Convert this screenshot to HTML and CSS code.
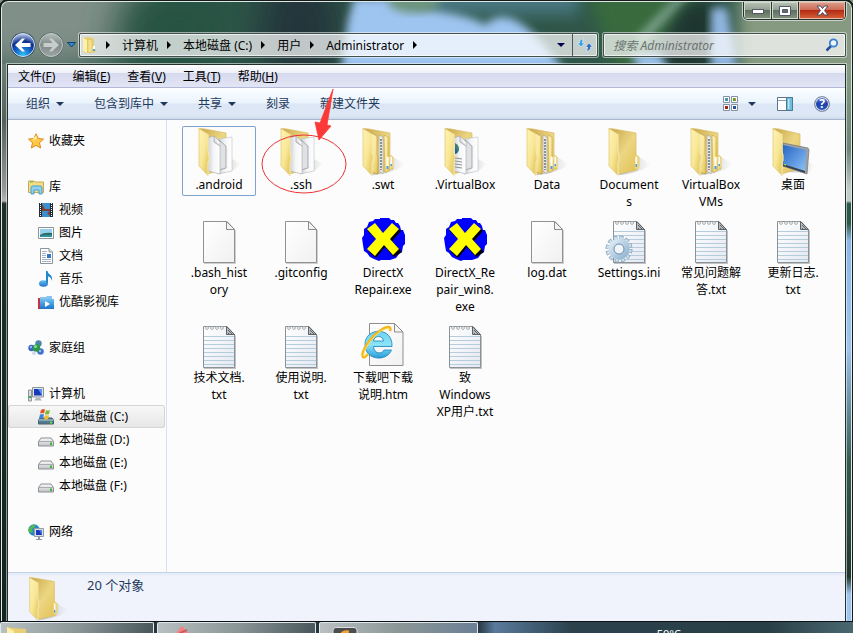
FILE: index.html
```html
<!DOCTYPE html>
<html lang="zh-CN">
<head>
<meta charset="utf-8">
<title>Administrator</title>
<link rel="stylesheet" href="styles.css">
</head>
<body>
<svg class="defs" width="0" height="0" aria-hidden="true">
  <defs>
    <linearGradient id="gPanel" x1="0" y1="0" x2="1" y2="1"><stop offset="0" stop-color="#fff3b5"/><stop offset=".5" stop-color="#f8e795"/><stop offset="1" stop-color="#dfbd4d"/></linearGradient>
    <linearGradient id="gBack" x1="0" y1="0" x2="1" y2="1"><stop offset="0" stop-color="#c7a448"/><stop offset=".5" stop-color="#ecd682"/><stop offset="1" stop-color="#e2bf50"/></linearGradient>
    <linearGradient id="gSheet" x1="0" y1="0" x2="1" y2="0"><stop offset="0" stop-color="#c9cbcf"/><stop offset=".5" stop-color="#f4f5f7"/><stop offset="1" stop-color="#fff"/></linearGradient>
    <linearGradient id="gPage" x1="0" y1="0" x2="1" y2="1"><stop offset="0" stop-color="#fff"/><stop offset="1" stop-color="#f1f1f1"/></linearGradient>
    <linearGradient id="gNote" x1="0" y1="0" x2="1" y2="1"><stop offset="0" stop-color="#fff"/><stop offset="1" stop-color="#e4e8f1"/></linearGradient>
    <linearGradient id="gScreen" x1="0" y1="0" x2="1" y2="1"><stop offset="0" stop-color="#2566c4"/><stop offset="1" stop-color="#8cc0f5"/></linearGradient>
    <linearGradient id="gShade" x1="0" y1="0" x2="1" y2="0"><stop offset="0" stop-color="#777" stop-opacity=".5"/><stop offset="1" stop-color="#999" stop-opacity="0"/></linearGradient>
    <linearGradient id="gGear" x1="0" y1="0" x2="1" y2="1"><stop offset="0" stop-color="#dceaf4"/><stop offset="1" stop-color="#93b5d0"/></linearGradient>
    <linearGradient id="gBlue" x1="0" y1="0" x2="0" y2="1"><stop offset="0" stop-color="#6cc0f0"/><stop offset="1" stop-color="#1d74c8"/></linearGradient>
    <linearGradient id="gE" x1="0" y1="0" x2="0" y2="1"><stop offset="0" stop-color="#6ed0f2"/><stop offset=".5" stop-color="#8be4f7"/><stop offset="1" stop-color="#2a9bd8"/></linearGradient>
    <radialGradient id="gNavBlue" cx=".5" cy=".95" r=".95"><stop offset="0" stop-color="#2fc4f7"/><stop offset=".4" stop-color="#155fc4"/><stop offset=".65" stop-color="#0d2f8c"/><stop offset="1" stop-color="#c5d5f2"/></radialGradient>
    <linearGradient id="gNavGray" x1="0" y1="0" x2="0" y2="1"><stop offset="0" stop-color="#b4bdbb"/><stop offset=".5" stop-color="#7f8b89"/><stop offset="1" stop-color="#9ca5a3"/></linearGradient>
    <linearGradient id="gDrive" x1="0" y1="0" x2="0" y2="1"><stop offset="0" stop-color="#fafafa"/><stop offset="1" stop-color="#bfc2c6"/></linearGradient>

    <symbol id="panel" viewBox="0 0 48 48">
      <path d="M4 .5 13 6V24L14 27V33L13 34V47.500L4 38Z" fill="url(#gPanel)" stroke="#e0c772" stroke-width=".7"/>
      <path d="M13 6V24L14 27V33L13 34V47" fill="none" stroke="#fff6cf" stroke-width=".8"/>
    </symbol>
    <symbol id="folder" viewBox="0 0 48 48">
      <path d="M14 46 33 40 34 29 46 36C42 41 28 46 14 47Z" fill="url(#gShade)"/>
      <path d="M4 .5 9 1 31 5V27L34 29V39L32 42 13 46Z" fill="url(#gBack)" stroke="#d9bd61" stroke-width=".7"/>
      <path d="M30 28Q34 27 34 30V39Q33 42 30 41Z" fill="#edd77f"/><path d="M30.500 29H32V39H30.500Z" fill="#fff"/><path d="M30.500 36H32V39H30.500Z" fill="#4c9bdc"/>
      <use href="#panel"/>
    </symbol>
    <symbol id="folder-docs" viewBox="0 0 48 48">
      <path d="M24 46 37 43 46 36 37 31Z" fill="url(#gShade)"/>
      <path d="M4 .5 10 1 31 5V40L13 46Z" fill="url(#gBack)" stroke="#d9bd61" stroke-width=".7"/>
      <path d="M23 11 37 9V43L23 46Z" fill="url(#gSheet)" stroke="#bfc1c4" stroke-width=".6"/><path d="M24 12 31 18V40L24 42Z" fill="#dfe1e4" stroke="#8d9093" stroke-width=".7"/>
      <path d="M12 10 19 8 25 14V46L13 43Z" fill="url(#gSheet)" stroke="#aaa" stroke-width=".6"/><path d="M19 8V14L25 18" fill="#e3e5e8" stroke="#8d9093" stroke-width=".7"/>
      <use href="#panel"/>
    </symbol>
    <symbol id="folder-vbox" viewBox="0 0 48 48">
      <use href="#folder-docs"/>
      <path d="M14 15Q18 17 18 21T14 26Z" fill="#3d7e72"/><path d="M14 20Q17 21 16 25L14 26Z" fill="#2462a5"/>
      <path d="M14 30 21 31M14 33 21 34M14 36 21 37M14 39 21 40" stroke="#888" stroke-width=".9"/>
    </symbol>
    <symbol id="folder-nested" viewBox="0 0 48 48">
      <path d="M14 46 33 40 34 29 46 36C42 41 28 46 14 47Z" fill="url(#gShade)"/>
      <path d="M4 .5 10 1 31 5V27L34 29V41L13 46Z" fill="url(#gBack)" stroke="#d9bd61" stroke-width=".7"/>
      <path d="M20 7 24 9V46L20 43Z" fill="#e9e9ea" stroke="#999" stroke-width=".5"/><path d="M22 11V42" stroke="#64758a" stroke-width="1.500" stroke-dasharray="2 1"/>
      <path d="M25 7 29 9V28L31 30V42L26 45Z" fill="url(#gPanel)" stroke="#c3a04a" stroke-width=".6"/><path d="M27.500 29H29.500V41H27.500Z" fill="#fff"/><path d="M27.500 38H29.500V41H27.500Z" fill="#4c9bdc"/>
      <path d="M30 28Q34 27 34 30V39L31 42Z" fill="#edd77f"/><path d="M31.500 29H33V38H31.500Z" fill="#fff"/><path d="M31.500 36H33V38H31.500Z" fill="#4c9bdc"/>
      <path d="M12 5 18 8V26L19 29V46L13 44Z" fill="url(#gPanel)" stroke="#b9953f" stroke-width=".6"/>
      <use href="#panel"/>
    </symbol>
    <symbol id="folder-desktop" viewBox="0 0 48 48">
      <path d="M18 44 40 45 46 38 40 34Z" fill="url(#gShade)"/>
      <path d="M4 .5 10 1 31 6V40L13 46Z" fill="url(#gBack)" stroke="#d9bd61" stroke-width=".7"/>
      <path d="M14 15 39 20 40 22 38 46 14 38Z" fill="#9aa1a8" stroke="#70767c" stroke-width=".7"/>
      <path d="M14 17 37 22 36 43 14 36Z" fill="url(#gScreen)"/><path d="M14 36 36 43V45L14 38Z" fill="#354150"/><path d="M14 36H17V38Z" fill="#a9d23c"/>
      <use href="#panel"/>
    </symbol>
    <symbol id="page" viewBox="0 0 48 48">
      <path d="M9 6.500H33L41 14.500V48H9Z" fill="#999" opacity=".45"/>
      <path d="M8.500 5.500H32L39.500 13.500V46.500H8.500Z" fill="url(#gPage)" stroke="#929292"/>
      <path d="M31.500 5.500V13.500H39.500Z" fill="#f4f4f4" stroke="#8b8b8b"/>
    </symbol>
    <symbol id="note" viewBox="0 0 48 48">
      <path d="M9 7H33L41 15V48H9Z" fill="#888" opacity=".5"/>
      <path d="M8.500 5.500H32L39.500 13.500V46.500H8.500Z" fill="url(#gNote)" stroke="#8a9299"/>
      <path d="M9 15.500H39M9 19.500H39M9 23.500H39M9 27.500H39M9 31.500H39M9 35.500H39M9 39.500H39M9 43.500H39" stroke="#b5cddb"/>
      <g fill="#fff" stroke="#999" stroke-width=".8"><circle cx="12" cy="7" r="1.400"/><circle cx="17" cy="7" r="1.400"/><circle cx="22" cy="7" r="1.400"/><circle cx="27" cy="7" r="1.400"/></g>
      <path d="M31.500 5.500 39.500 13.500H31.500Z" fill="#b6babd" stroke="#5e6367"/><path d="M33 9 38 14M33 12 35 14" stroke="#5e6367"/>
    </symbol>
    <symbol id="settings" viewBox="0 0 48 48">
      <use href="#note"/>
      <circle cx="14" cy="33" r="11" fill="none" stroke="#7f9db8" stroke-width="5" stroke-dasharray="3.800 1.960"/>
      <circle cx="14" cy="33" r="11" fill="none" stroke="#cbdeeb" stroke-width="3.600" stroke-dasharray="2.800 2.960" stroke-dashoffset="-.500"/>
      <circle cx="14" cy="33" r="7.800" fill="none" stroke="url(#gGear)" stroke-width="5.600"/>
      <circle cx="14" cy="33" r="5" fill="#f0f5fa" stroke="#6d8dac"/>
    </symbol>
    <symbol id="dx" viewBox="0 0 48 48">
      <path d="M21 2H30L32 4H35L37 7H39L41 10 42 14H44L46 19V28L44 30 43 36 40 38 37 42 31 44H22L20 45 15 43 11 41 8 37 5 35 4 29 3 22 5 19V13L8 11 10 6 14 5 16 3H21Z" fill="#00f"/>
      <path d="M9 15 17 9 25 18 34 9 42 15 33 25 43 36 35 41 26 31 17 42 10 36 19 25Z" fill="#000"/>
      <path d="M8 13 16 7 24 17 33 7 40 13 31 23 40 33 34 39 25 29 16 40 8 33 17 23Z" fill="#ff0"/>
    </symbol>
    <symbol id="ie-page" viewBox="0 0 48 48">
      <path d="M10.500 2.500H35.500L44 11V44.500H10.500Z" fill="url(#gPage)" stroke="#8f8f8f"/><path d="M35.500 2.500V11H44Z" fill="#f5f5f5" stroke="#8b8b8b"/>
      <path d="M33 25.500H14.500C15 33 23 33.500 25 29H32.500C28 41 6 40 6 23.500C6 6 34 5 33 25.500ZM14.500 20H24.500C24 14 15 14 14.500 20Z" fill="url(#gE)" stroke="#1682bd" stroke-width=".8"/>
      <path d="M9 33C7 35 5 37 4 36C1 32 12 15 22 9C28 5 33 5 31 10" fill="none" stroke="#f4b716" stroke-width="2.600"/>
      <path d="M8 33C6 35 5 36 5 35C3 31 13 16 22 10C28 7 31 6 30 9" fill="none" stroke="#ffe46b" stroke-width=".9"/>
    </symbol>
    <symbol id="drive" viewBox="0 0 16 16">
      <path d="M3 6H13L15.500 9.500V14H.5V9.500Z" fill="url(#gDrive)" stroke="#8c8f94"/><path d="M.5 9.500H15.500" stroke="#a9acb0"/><path d="M12 10.500H14V13H12Z" fill="#39b832"/>
    </symbol>
    <symbol id="caret" viewBox="0 0 8 4"><path d="M0 0H8L4 4Z" fill="currentColor"/></symbol>
    <symbol id="crumb-arrow" viewBox="0 0 4 8"><path d="M0 0 4 4 0 8Z" fill="#000"/></symbol>
  </defs>
</svg>

<div class="desktop">
  <svg class="wallpaper" viewBox="0 0 853 633" preserveAspectRatio="none" aria-hidden="true">
    <defs>
      <filter id="soft" x="-20%" y="-20%" width="140%" height="140%"><feGaussianBlur stdDeviation="4"/></filter>
      <filter id="mid" x="-30%" y="-30%" width="160%" height="160%"><feGaussianBlur stdDeviation="8"/></filter>
      <filter id="softer" x="-30%" y="-30%" width="160%" height="160%"><feGaussianBlur stdDeviation="18"/></filter>
      <linearGradient id="wl" x1="0" y1="0" x2="0" y2="1"><stop offset="0" stop-color="#6b7f78"/><stop offset=".1" stop-color="#53615c"/><stop offset=".22" stop-color="#999"/><stop offset=".24" stop-color="#b5b5b5"/><stop offset=".245" stop-color="#1d3029"/><stop offset="1" stop-color="#12241f"/></linearGradient>
      <linearGradient id="wr" x1="0" y1="0" x2="0" y2="1"><stop offset="0" stop-color="#879f82"/><stop offset=".15" stop-color="#6a8577"/><stop offset=".22" stop-color="#c2cdc9"/><stop offset=".24" stop-color="#c2cdc9"/><stop offset=".245" stop-color="#2c5a48"/><stop offset=".28" stop-color="#2c5a48"/><stop offset=".31" stop-color="#8bb7e8"/><stop offset=".5" stop-color="#9bc4f1"/><stop offset=".7" stop-color="#35594e"/><stop offset=".9" stop-color="#20382f"/><stop offset=".93" stop-color="#9cc5f4"/></linearGradient>
    </defs>
    <rect width="853" height="633" fill="#2f5649"/>
    <ellipse cx="40" cy="10" rx="120" ry="60" fill="#809089" filter="url(#softer)"/>
    <ellipse cx="175" cy="30" rx="60" ry="50" fill="#285343" filter="url(#softer)"/>
    <ellipse cx="300" cy="30" rx="42" ry="60" fill="#24353a" filter="url(#softer)"/>
    <rect x="390" y="-20" width="190" height="34" fill="#4a7882" filter="url(#mid)"/>
    <path d="M354 -2 348 20 341 70H565C540 40 522 16 500 17Q488 20 486 25C460 10 425 14 400 -2Z" fill="#9ec4f0" filter="url(#soft)"/>
    <ellipse cx="414" cy="2" rx="26" ry="11" fill="#6d957e" filter="url(#soft)"/>
    <path d="M585 -10H700L640 70H615Z" fill="#396a3e" filter="url(#mid)"/>
    <path d="M690 -10 640 40" stroke="#79a08a" stroke-width="10" filter="url(#soft)"/>
    <path d="M685 5 715 0 710 70H650Z" fill="#1d352d" filter="url(#mid)"/>
    <path d="M738 -10H870V80H738Z" fill="#859a80" filter="url(#mid)"/>
    <path d="M711 8H727L737 70H711Z" fill="#91b5df" filter="url(#soft)"/>
    <path d="M630 54H660L670 70H640Z" fill="#9ec4f0" filter="url(#soft)"/>
    <rect y="64" width="9" height="570" fill="url(#wl)"/><rect x="844" y="64" width="9" height="570" fill="url(#wr)"/>
  </svg>

  <div class="window">
    <header class="titlebar">
      <div class="controls">
        <button class="ctl" type="button" aria-label="最小化"><svg width="14" height="8" viewBox="0 0 14 8"><rect x="1.500" y="2.500" width="11" height="4" fill="#fff" stroke="#53596b"/></svg></button>
        <button class="ctl ctl-max" type="button" aria-label="最大化"><svg width="12" height="10" viewBox="0 0 12 10"><path d="M.5.5H11.500V9.500H.5ZM3.500 3.500V6.500H8.500V3.500Z" fill="#fff" fill-rule="evenodd" stroke="#53596b"/></svg></button>
        <button class="ctl ctl-close" type="button" aria-label="关闭"><svg width="13" height="12" viewBox="0 0 13 12"><path d="M1 1H4.500L6.500 3.500 8.500 1H12L8.500 5.500 12 10H8.500L6.500 7.500 4.500 10H1L4.500 5.500Z" fill="#fff" stroke="#4b4f5f"/></svg></button>
      </div>
    </header>

    <div class="navrow">
      <div class="navbtns">
        <button type="button" aria-label="后退"><svg width="26" height="26" viewBox="0 0 26 26"><circle cx="13" cy="13" r="12.500" fill="#26394a"/><circle cx="13" cy="13" r="11.500" fill="url(#gNavBlue)" stroke="#d4e1f3"/><path d="M5 13 12 6.500H15L11.500 11H20.500V15H11.500L15 19.500H12Z" fill="#fff"/></svg></button>
        <button type="button" aria-label="前进"><svg width="26" height="26" viewBox="0 0 26 26"><circle cx="13" cy="13" r="12.500" fill="#52605d"/><circle cx="13" cy="13" r="11.500" fill="url(#gNavGray)" stroke="#c4cbc9"/><path d="M21 13 14 6.500H11L14.500 11H5.500V15H14.500L11 19.500H14Z" fill="#c7cdcb"/></svg></button>
        <button class="history" type="button" aria-label="最近的页面"><svg width="9" height="6" viewBox="0 0 9 6"><path d="M.5.5H8.500L4.500 5Z" fill="#2b8cdc" stroke="#153e66"/></svg></button>
      </div>
      <div class="address">
        <svg class="address-icon" width="16" height="16" viewBox="0 0 16 16"><path d="M1 1 5 0 12 1V12L14 13V15L5 16 1 15Z" fill="#e7cf76"/><path d="M1 1 5 3V16L1 14Z" fill="#fdf0a9"/><path d="M6 2 10 3V15L6 16Z" fill="#f6e28e" stroke="#d2b452" stroke-width=".5"/><path d="M11 9H13V14H11Z" fill="#fff"/><path d="M11 12H13V14H11Z" fill="#4ba8dd"/></svg>
        <svg class="sep" width="4" height="8"><use href="#crumb-arrow"/></svg>
        <a href="#">计算机</a>
        <svg class="sep" width="4" height="8"><use href="#crumb-arrow"/></svg>
        <a href="#">本地磁盘 (C:)</a>
        <svg class="sep" width="4" height="8"><use href="#crumb-arrow"/></svg>
        <a href="#">用户</a>
        <svg class="sep" width="4" height="8"><use href="#crumb-arrow"/></svg>
        <a href="#">Administrator</a>
        <svg class="sep" width="4" height="8"><use href="#crumb-arrow"/></svg>
        <button class="drop" type="button" aria-label="以前的位置"><svg width="8" height="4"><use href="#caret"/></svg></button>
        <button class="refresh" type="button" aria-label="刷新"><svg width="16" height="14" viewBox="0 0 16 14"><path d="M6.500 1C3 1 2.500 3 2.500 5H.5L4 9 7.500 5H5.500C5.500 3 5.500 2 6.500 1Z" fill="#3aa3e5" stroke="#fff" stroke-width=".5"/><path d="M9 13C13 13 13.500 11 13.500 9H15.500L12 5 8.500 9H10.500C10.500 11 10.500 12 9 13Z" fill="#2f6ec4" stroke="#fff" stroke-width=".5"/></svg></button>
      </div>
      <div class="search">
        <input type="search" aria-label="搜索 Administrator" placeholder="搜索 Administrator">
        <svg width="14" height="14" viewBox="0 0 14 14"><path d="M1.500 12.500 6 8" stroke="#22509a" stroke-width="2.500"/><circle cx="8.500" cy="5" r="3.700" fill="#eef6fd" stroke="#3b7fd0" stroke-width="1.800"/></svg>
      </div>
    </div>

    <div class="client">
      <nav class="menubar" aria-label="菜单">
        <button type="button">文件(<u>F</u>)</button><button type="button">编辑(<u>E</u>)</button><button type="button">查看(<u>V</u>)</button><button type="button">工具(<u>T</u>)</button><button type="button">帮助(<u>H</u>)</button>
      </nav>
      <div class="toolbar">
        <button type="button">组织<svg width="8" height="4"><use href="#caret"/></svg></button>
        <button type="button">包含到库中<svg width="8" height="4"><use href="#caret"/></svg></button>
        <button type="button">共享<svg width="8" height="4"><use href="#caret"/></svg></button>
        <button type="button">刻录</button>
        <button type="button">新建文件夹</button>
        <div class="tools">
          <button type="button" aria-label="更改视图"><svg width="15" height="15" viewBox="0 0 15 15"><g fill="#fff" stroke="#8491a5"><path d="M.5.5H6.500V6.500H.5ZM8.500.5H14.500V6.500H8.500ZM.5 8.500H6.500V14.500H.5ZM8.500 8.500H14.500V14.500H8.500Z"/></g><path d="M2 2H5V5H2Z" fill="#3f9ba6"/><path d="M10 2H13V5H10Z" fill="#4da12c"/><path d="M12 2H13V4H12Z" fill="#ef8a1a"/><path d="M2 10H5V13H2Z" fill="#a92413"/><path d="M10 10H13V13H10Z" fill="#2b5598"/></svg><svg width="8" height="4"><use href="#caret"/></svg></button>
          <button type="button" aria-label="显示预览窗格"><svg width="16" height="14" viewBox="0 0 16 14"><path d="M.5.5H15.500V13.500H.5Z" fill="#fff" stroke="#60738d"/><path d="M1 3.500H10" stroke="#8da0b6"/><path d="M9.500.5H15.500V13.500H9.500Z" fill="#70bddb" stroke="#4c7a98"/><path d="M11 2H12.500V12H11Z" fill="#b4e3f1"/></svg></button>
          <button type="button" aria-label="获取帮助" class="help"><span>?</span></button>
        </div>
      </div>

      <div class="panes">
        <nav class="tree" aria-label="导航窗格">
          <ul>
            <li><a href="#"><svg viewBox="0 0 16 16"><path d="M8 .8 10.200 5.500 15.500 6.100 11.500 9.700 12.600 15 8 12.400 3.400 15 4.500 9.700.5 6.100 5.800 5.500Z" fill="#ffc948" stroke="#e0891d"/><path d="M8 2.500 9 6 4 7Z" fill="#ffefad"/></svg>收藏夹</a></li>
          </ul>
          <ul>
            <li><a href="#"><svg viewBox="0 0 16 16"><path d="M.5 3.500V2H6L7 3H15.500V13.500H.5Z" fill="#f1dc88" stroke="#c9a94d"/><path d="M2 3H5" stroke="#53b94b"/><path d="M3 15V9Q3 7 5 7H12Q14 7 14 9V15H11V11H6V15Z" fill="#8fd0ef" stroke="#4a9fcd"/></svg>库</a></li>
            <li class="child"><a href="#"><svg viewBox="0 0 16 16"><path d="M1 1H15V15H1Z" fill="#252b33"/><path d="M4 1H12V15H4Z" fill="#3a8fd0"/><path d="M4 7H12V9H4ZM4 2 7 7H4ZM9 11 12 9V14Z" fill="#7e4034"/><path d="M2.500 1V15M13.500 1V15" stroke="#fff" stroke-dasharray="1 1"/></svg>视频</a></li>
            <li class="child"><a href="#"><svg viewBox="0 0 16 16"><path d="M.5 2.500H15.500V13.500H.5Z" fill="#fff" stroke="#8b959c"/><path d="M2 4H14V12H2Z" fill="#97d0ef"/><path d="M2 10Q6 7 14 8V12H2Z" fill="#266d5e"/><path d="M2 11Q7 9 14 10V12H2Z" fill="#338fa2"/></svg>图片</a></li>
            <li class="child"><a href="#"><svg viewBox="0 0 16 16"><path d="M2.500.5H11L14.500 4V15.500H2.500Z" fill="#fff" stroke="#8b959c"/><path d="M11 .5V4H14.500" fill="#ddd" stroke="#8b959c"/><path d="M4 3.500H9M4 5.500H8M4 7.500H8M4 9.500H8M4 11.500H13M4 13.500H13" stroke="#a7b2c7"/><path d="M9 6H13V10H9Z" fill="#3277c5"/></svg>文档</a></li>
            <li class="child"><a href="#"><svg viewBox="0 0 16 16"><ellipse cx="5.500" cy="12.500" rx="4.500" ry="3.200" fill="url(#gBlue)"/><path d="M8 12V0H9.500C10 4 16 4 13.500 10C13.500 6 11 6 10 5.500V12Z" fill="#2487cf"/></svg>音乐</a></li>
            <li class="child"><a href="#"><svg viewBox="0 0 16 16"><path d="M0 4H4V15H0Z" fill="#c93140"/><path d="M2 3H8L9 2H14V6H2Z" fill="#87c3ed"/><path d="M2 5H16V15H2Z" fill="url(#gBlue)"/><path d="M7 7 12 10 7 13Z" fill="#fff"/></svg>优酷影视库</a></li>
          </ul>
          <ul>
            <li><a href="#"><svg viewBox="0 0 16 16"><circle cx="10.500" cy="3.500" r="3.200" fill="#4b86a8"/><circle cx="3.500" cy="8" r="3.200" fill="#3c66c8"/><circle cx="12.500" cy="11.500" r="3.300" fill="#4673ce"/><circle cx="6" cy="13" r="2" fill="#cbd9ee"/><circle cx="8.500" cy="8" r="3.700" fill="#2c9a43"/><circle cx="7.500" cy="6.500" r="1.500" fill="#90da93"/><circle cx="3" cy="7" r="1" fill="#b8ceff"/><circle cx="12" cy="11" r="1" fill="#b8ceff"/></svg>家庭组</a></li>
          </ul>
          <ul>
            <li><a href="#"><svg viewBox="0 0 16 16"><path d="M.5 4H3.500V15H.5Z" fill="#d8dbdf" stroke="#8c949c"/><path d="M1 10H3V12H1Z" fill="#3da542"/><path d="M4.500 1.500H15.500V11H4.500Z" fill="#dfe4ea" stroke="#8c949c"/><path d="M6 3H14V9.500H6Z" fill="#1739ba"/><path d="M10 3H14V9.500Z" fill="#5c91ef"/><path d="M8 12H12L14 14.500H6Z" fill="#aeb5bd"/></svg>计算机</a></li>
            <li class="child selected"><a href="#" aria-current="page"><svg viewBox="0 0 16 16"><path d="M2 9H14L15.500 11V15H.5V11Z" fill="#527b8f" stroke="#45606d"/><path d="M.5 11H15.500" stroke="#bdd2da"/><path d="M12 12.500H14V14.500H12Z" fill="#5ee243"/><path d="M3 1Q5 -.5 7 .5L6 4.500Q4 3.500 2 4.500Z" fill="#e45327"/><path d="M8 1Q10 2 12 1L11 5Q9 6 7 5Z" fill="#7cb93b"/><path d="M2 5.500Q4 4.500 6 5.500L5 9.500Q3 8.500 1 9.500Z" fill="#3887d3"/><path d="M7 6Q9 7 11 6L10 10Q8 11 6 10Z" fill="#f3bd27"/></svg>本地磁盘 (C:)</a></li>
            <li class="child"><a href="#"><svg><use href="#drive"/></svg>本地磁盘 (D:)</a></li>
            <li class="child"><a href="#"><svg><use href="#drive"/></svg>本地磁盘 (E:)</a></li>
            <li class="child"><a href="#"><svg><use href="#drive"/></svg>本地磁盘 (F:)</a></li>
          </ul>
          <ul>
            <li><a href="#"><svg viewBox="0 0 16 16"><circle cx="6" cy="6" r="5.700" fill="#2386c8"/><path d="M2 3Q5 0 8 1L6 4 4 5 5 8 2 9 0 6Z" fill="#55b94c"/><path d="M6.500 4.500H15.500V12.500H6.500Z" fill="#dbe0e6" stroke="#959ca4"/><path d="M8 6H14V11H8Z" fill="#1739ba"/><path d="M11 6H14V11Z" fill="#447be0"/><path d="M10 13H12V15H14V16H8V15H10Z" fill="#8f98a3"/></svg>网络</a></li>
          </ul>
        </nav>

        <main class="files">
          <a class="file focused" href="#"><svg><use href="#folder-docs"/></svg><span>.android</span></a>
          <a class="file" href="#"><svg><use href="#folder-docs"/></svg><span>.ssh</span></a>
          <a class="file" href="#"><svg><use href="#folder-nested"/></svg><span>.swt</span></a>
          <a class="file" href="#"><svg><use href="#folder-vbox"/></svg><span>.VirtualBox</span></a>
          <a class="file" href="#"><svg><use href="#folder-nested"/></svg><span>Data</span></a>
          <a class="file" href="#"><svg><use href="#folder"/></svg><span>Document<br>s</span></a>
          <a class="file" href="#"><svg><use href="#folder-nested"/></svg><span>VirtualBox VMs</span></a>
          <a class="file" href="#"><svg><use href="#folder-desktop"/></svg><span>桌面</span></a>
          <a class="file" href="#"><svg><use href="#page"/></svg><span>.bash_hist<wbr>ory</span></a>
          <a class="file" href="#"><svg><use href="#page"/></svg><span>.gitconfig</span></a>
          <a class="file" href="#"><svg><use href="#dx"/></svg><span>DirectX Repair.exe</span></a>
          <a class="file" href="#"><svg><use href="#dx"/></svg><span>DirectX_Re<wbr>pair_win8.<wbr>exe</span></a>
          <a class="file" href="#"><svg><use href="#page"/></svg><span>log.dat</span></a>
          <a class="file" href="#"><svg><use href="#settings"/></svg><span>Settings.ini</span></a>
          <a class="file" href="#"><svg><use href="#note"/></svg><span>常见问题解<wbr>答.txt</span></a>
          <a class="file" href="#"><svg><use href="#note"/></svg><span>更新日志.<br>txt</span></a>
          <a class="file" href="#"><svg><use href="#note"/></svg><span>技术文档.<br>txt</span></a>
          <a class="file" href="#"><svg><use href="#note"/></svg><span>使用说明.<br>txt</span></a>
          <a class="file" href="#"><svg><use href="#ie-page"/></svg><span>下载吧下载<wbr>说明.htm</span></a>
          <a class="file" href="#"><svg><use href="#note"/></svg><span>致<br>Windows XP用户.txt</span></a>
          <svg class="annotation" width="88" height="108" viewBox="0 0 88 108" aria-hidden="true"><ellipse cx="43" cy="76" rx="42" ry="29" fill="none" stroke="#ec3338"/><path d="M72 1 66 37 70 38 58 52 54 34 59 35Z" fill="#fb3a37" stroke="#fb3a37" stroke-width=".8"/></svg>
        </main>
      </div>

      <footer class="details">
        <svg width="44" height="44"><use href="#folder"/></svg>
        <span>20 个对象</span>
      </footer>
    </div>
  </div>

  <div class="taskbar">
    <button class="task" type="button" aria-label="Administrator"><svg width="24" height="14" viewBox="0 0 24 14"><path d="M2 14V4L8 5 21 6V14Z" fill="#e8ce74"/><path d="M2 4 9 8V14H2Z" fill="#fff0a8"/></svg></button>
    <button class="task" type="button" aria-label="应用"><svg width="24" height="14" viewBox="0 0 24 14"><path d="M4 13 12 3 21 13Z" fill="#fb7d7d"/><path d="M10 10 17 7" stroke="#b65b62" stroke-width="1.500"/></svg></button>
    <button class="task" type="button" aria-label="编辑器"><svg width="28" height="14" viewBox="0 0 28 14"><rect x="1" y="4.500" width="24" height="20" rx="3" fill="#4c4c4c" stroke="#ddd"/><path d="M9 14Q9 8 17 9" stroke="#f5a13a" stroke-width="3" fill="none"/></svg></button>
    <span class="temp">50°C</span>
  </div>
</div>
</body>
</html>
```
FILE: styles.css
```css
* { box-sizing: border-box; }
body {
  margin: 0;
  font: 12px/17px "Noto Sans", "Noto Sans CJK SC", sans-serif;
  color: #000;
}
button {
  margin: 0;
  padding: 0;
  border: 0;
  background: none;
  font: inherit;
  color: inherit;
  display: inline-flex;
  align-items: center;
  justify-content: center;
}
a { color: inherit; text-decoration: none; }
svg { display: block; flex: none; }
.defs { position: absolute; }

.desktop {
  position: relative;
  display: flex;
  flex-direction: column;
  height: 100vh;
  overflow: hidden;
  background: #16181a;
}
.wallpaper { position: absolute; inset: 0; width: 100%; height: 100%; }

.window {
  position: relative;
  flex: 1;
  min-height: 0;
  display: flex;
  flex-direction: column;
  margin: 1px 1px 0;
  padding: 0 5px;
  border: 1px solid #dfe8e5;
  border-bottom: 0;
  border-radius: 7px 7px 0 0;
  outline: 2px solid #141b19;
}

.titlebar { height: 30px; display: flex; justify-content: flex-end; align-items: flex-start; }
.controls {
  display: flex;
  border: 1px solid #252f2c;
  border-top: 0;
  border-radius: 0 0 5px 5px;
  box-shadow: 0 0 0 1px #c8d3cb;
  overflow: hidden;
}
.ctl {
  width: 28px;
  height: 17px;
  background: linear-gradient(#b6c2b5, #93a192 45%, #5e705f 50%, #84967f);
  box-shadow: inset 0 0 0 1px #d0dacd;
  border-right: 1px solid #2b3531;
}
.ctl-max { width: 27px; }
.ctl-close {
  width: 46px;
  border-right: 0;
  background: linear-gradient(#dc9e8e, #cc6d56 45%, #b52a12 50%, #d6653c);
  box-shadow: inset 0 0 0 1px #eab9a8;
}

.navrow {
  display: grid;
  grid-template-columns: 64px minmax(0, 518fr) minmax(0, 242fr);
  align-items: center;
  gap: 5px;
  height: 26px;
  padding-left: 3px;
}
.navbtns {
  display: flex;
  align-items: center;
  gap: 2px;
}
.navbtns button:first-child, .navbtns button:nth-child(2) { border-radius: 50%; }
.history { margin-left: 1px; }
.address, .search {
  display: flex;
  align-items: center;
  height: 24px;
  border: 1px solid #41504e;
  border-radius: 2px;
  box-shadow: 0 0 0 1px #ffffff88, inset 0 0 0 1px #ffffffaa;
  background: #ffffffb8;
}
.address { padding-left: 2px; }
.address-icon { margin-right: 8px; }
.sep { margin: 0 12px 0 9px; }
.address-icon + .sep { margin-left: 0; }
.address a { white-space: nowrap; }
.drop { width: 22px; height: 22px; margin-left: auto; color: #000050; }
.refresh { width: 25px; height: 22px; border-left: 1px solid #4c5a5c; }
.search { padding-right: 6px; }
.search input {
  flex: 1;
  min-width: 0;
  padding: 0 9px;
  border: 0;
  outline: 0;
  background: none;
  font: inherit;
  font-style: italic;
}
.search input::placeholder { color: #6a7471; opacity: 1; }

.client {
  flex: 1;
  min-height: 0;
  display: flex;
  flex-direction: column;
  margin-top: 6px;
  border: 1px solid #22302c;
  border-bottom: 0;
  box-shadow: 0 0 0 1px #ffffff88;
  background: #fcfcfc;
}
.menubar {
  display: flex;
  align-items: center;
  gap: 17px;
  height: 23px;
  padding-left: 10px;
  border-bottom: 1px solid #b3b8d6;
  background: linear-gradient(#fff, #eef0f9 35%, #d6daee 38%, #e2e5f5);
}
.toolbar {
  display: flex;
  align-items: center;
  gap: 30px;
  height: 32px;
  padding: 0 15px 0 18px;
  border-bottom: 1px solid #a9b8cf;
  color: #1e395b;
  background: linear-gradient(#fcfeff, #eaf3fc 48%, #dce6f4 52%, #dde8f6 90%, #ccd9ea);
}
.toolbar button { gap: 6px; white-space: nowrap; }
.tools { display: flex; align-items: center; gap: 21px; margin-left: auto; }
.tools button:first-child { gap: 10px; }
.toolbar .help {
  width: 16px;
  height: 16px;
  border: 1px solid #8990a0;
  border-radius: 50%;
  box-shadow: inset 0 0 0 1px #dfe5f5;
  background: linear-gradient(#6a8be0, #1d3fa8 50%, #2c5fc8);
  color: #fff;
  font-weight: bold;
}

.panes { flex: 1; min-height: 0; display: flex; }
.tree {
  width: 159px;
  flex: none;
  padding: 9px 1px 0 0;
  border-right: 1px solid #d3e3f3;
  overflow: hidden;
}
.tree ul { margin: 0 0 23px; padding: 0; list-style: none; }
.tree a {
  display: flex;
  align-items: center;
  gap: 5px;
  height: 23px;
  padding-left: 20px;
  white-space: nowrap;
}
.tree .child a { padding-left: 30px; }
.tree svg { width: 16px; height: 16px; }
.selected {
  border-radius: 3px;
  box-shadow: inset 0 0 0 1px #d5d5d5;
  background: linear-gradient(#f8f8f8, #e6e6e6);
}

.files {
  position: relative;
  flex: 1;
  min-width: 0;
  display: grid;
  grid-template-columns: repeat(auto-fill, 74px);
  align-content: start;
  align-items: start;
  gap: 1px 8px;
  padding: 6px 0 0 15px;
}
.file {
  display: flex;
  flex-direction: column;
  align-items: center;
  padding: 2px 4px 3px;
  text-align: center;
}
.file svg { width: 48px; height: 48px; }
.file span { width: 66px; }
.focused { border-radius: 2px; box-shadow: inset 0 0 0 1px #7da2ce; }
.annotation { position: absolute; left: 94px; top: -32px; }

.details {
  display: flex;
  align-items: flex-start;
  gap: 17px;
  height: 49px;
  padding: 4px 0 0 18px;
  border-top: 1px solid #c3d3e8;
  background: linear-gradient(#e3ebf6, #f0f3fc 4px);
  color: #1e395b;
  font-size: 13px;
}

.taskbar {
  position: relative;
  display: flex;
  gap: 3px;
  height: 12px;
  overflow: hidden;
  border-top: 1px solid #0d1216;
  background: linear-gradient(90deg, #26363f 56%, #5a7a9c 58%, #2b424d 67%, #293f47 90%, #4a6770);
}
.task {
  flex: 0 1 159px;
  align-items: flex-start;
  justify-content: flex-start;
  height: 12px;
  padding-left: 12px;
  border: 1px solid #e2e8ea;
  border-bottom: 0;
  border-radius: 2px 2px 0 0;
  background: linear-gradient(100deg, #b9c1c2, #8b9697 50%, #48565b);
}
.task:first-child { flex-basis: 154px; padding-left: 4px; }
.task:nth-child(3) { background: linear-gradient(100deg, #b9c1c2, #8b9697 50%, #6b7f95); }
.temp { margin: 3px 0 0 auto; padding-right: 172px; color: #fff; font-size: 11px; }
```
